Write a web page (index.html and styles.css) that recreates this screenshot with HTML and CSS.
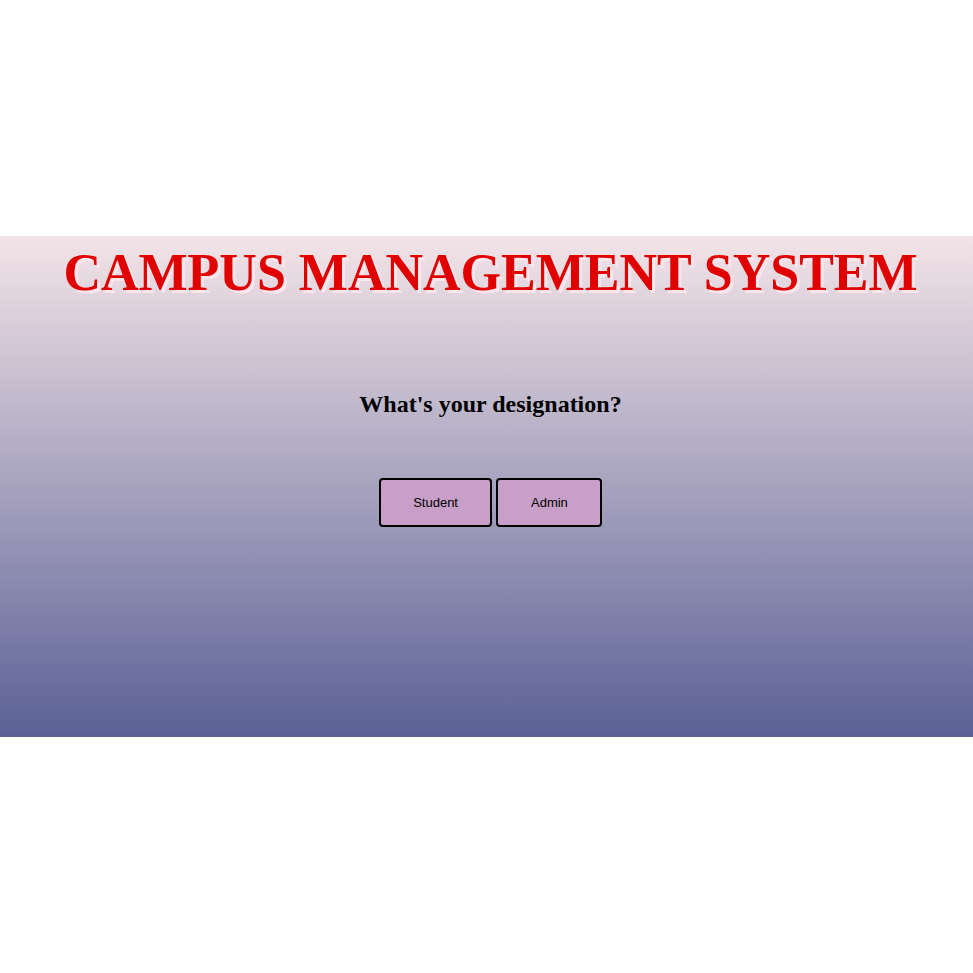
FILE: index.html
```html
<!DOCTYPE html>
<html>
<head>
<meta charset="utf-8">
<title>Campus Management System</title>
<link rel="stylesheet" href="styles.css">
</head>
<body>
<div class="page">
  <section class="panel">
    <h1 class="title">CAMPUS MANAGEMENT SYSTEM</h1>
    <h2 class="question">What's your designation?</h2>
    <div class="choices">
      <button class="btn">Student</button>
      <button class="btn">Admin</button>
    </div>
  </section>
</div>
</body>
</html>
```
FILE: styles.css
```css
html, body {
  margin: 0;
  padding: 0;
  background: #fff;
}
.page {
  min-height: 100vh;
  display: flex;
  align-items: center;
}
.panel {
  width: 100%;
  height: 501px;
  box-sizing: border-box;
  background: linear-gradient(to bottom, #f3e4e7 0%, #5b6196 100%);
  text-align: center;
  padding: 7px 0 0 8px;
}
.title {
  margin: 0;
  font-family: "Liberation Serif", "Times New Roman", serif;
  font-weight: bold;
  font-size: 52px;
  color: #e00000;
  text-shadow: 3px 3px 0 #fbe6ee;
}
.question {
  margin: 89px 0 0;
  font-family: "Liberation Serif", "Times New Roman", serif;
  font-weight: bold;
  font-size: 24px;
  color: #000;
}
.choices {
  margin-top: 60px;
  display: flex;
  justify-content: center;
  gap: 4px;
}
.btn {
  font-family: "Liberation Sans", Arial, sans-serif;
  font-size: 13px;
  color: #000;
  background: #c89fc9;
  border: 2px solid #000;
  border-radius: 4px;
  padding: 14px 32.5px;
  height: 49px;
  cursor: pointer;
}
```
